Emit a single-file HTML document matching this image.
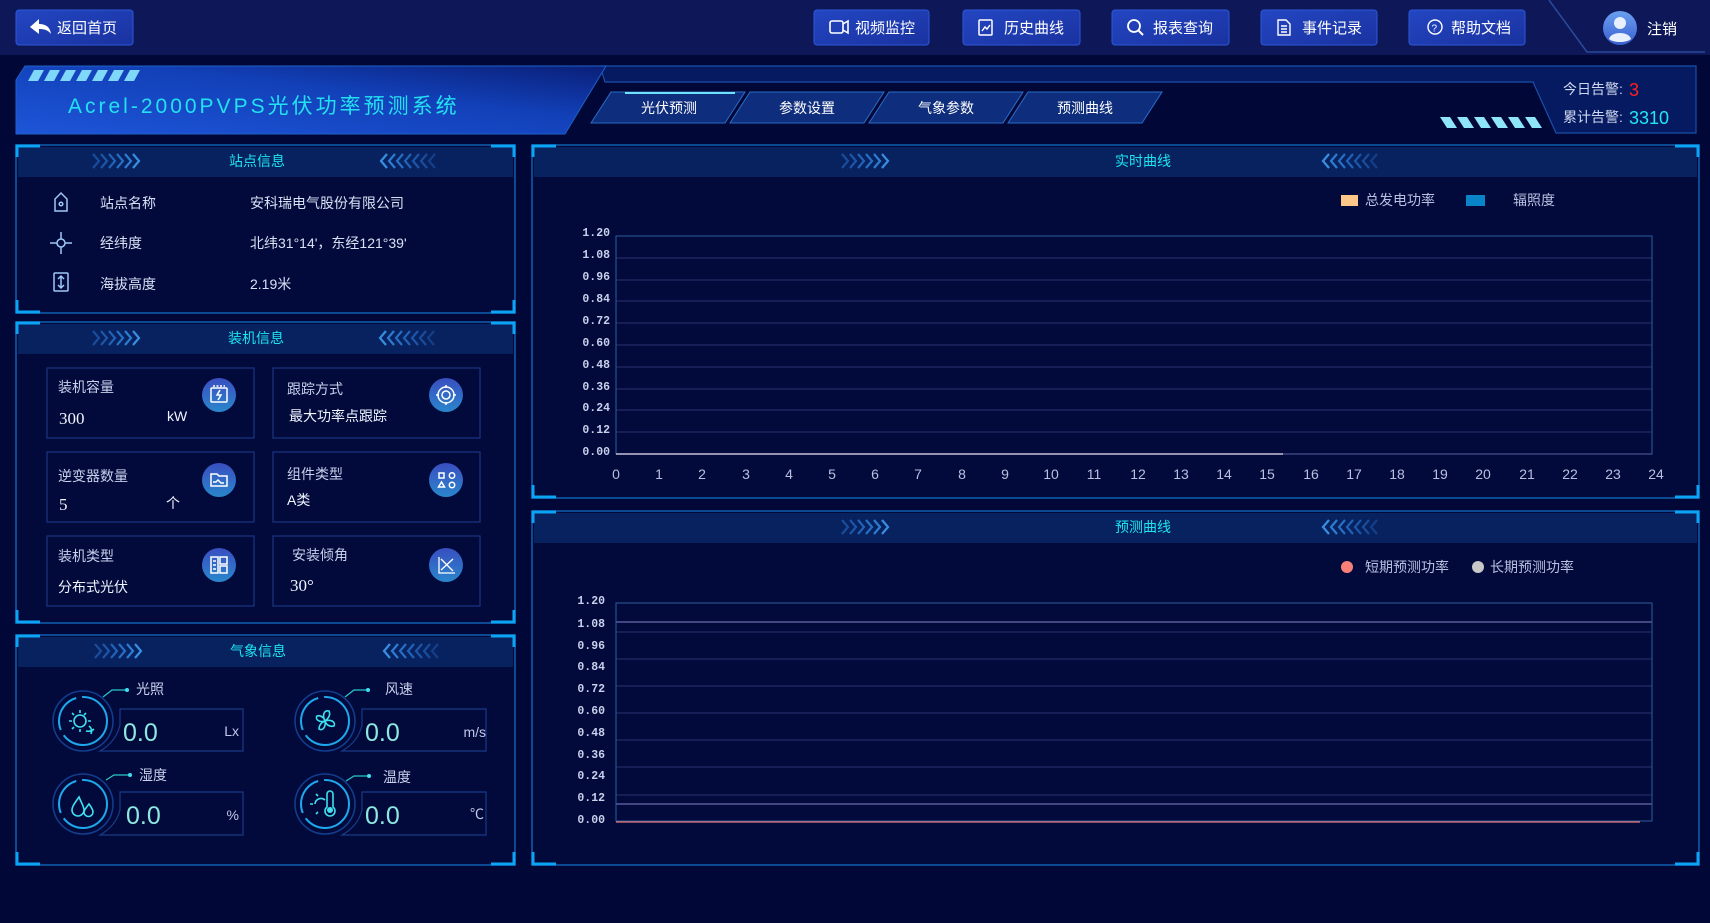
<!DOCTYPE html>
<html><head><meta charset="utf-8"><style>
html,body{margin:0;padding:0;background:#010838;width:1710px;height:923px;overflow:hidden}
svg{display:block;font-family:"Liberation Sans","Noto Sans CJK SC",sans-serif}
</style></head><body>
<svg width="1710" height="923" viewBox="0 0 1710 923" xmlns="http://www.w3.org/2000/svg">
<defs>
<linearGradient id="btn" x1="0" y1="0" x2="1" y2="1"><stop offset="0" stop-color="#2346c2"/><stop offset="1" stop-color="#1a32a0"/></linearGradient>
<linearGradient id="ban" x1="0" y1="1" x2="1" y2="0"><stop offset="0" stop-color="#1d55d8"/><stop offset="0.6" stop-color="#1240b8"/><stop offset="1" stop-color="#0a1f78"/></linearGradient>
<linearGradient id="ic" x1="0" y1="0" x2="0" y2="1"><stop offset="0" stop-color="#3a4ec0"/><stop offset="1" stop-color="#2a86cc"/></linearGradient>
<linearGradient id="av" x1="0" y1="0" x2="0" y2="1"><stop offset="0" stop-color="#6aa0f0"/><stop offset="1" stop-color="#3a5ed0"/></linearGradient>
<g id="chR" fill="none" stroke-width="2.2"><path d="M0,-7 l6,7 l-6,7" stroke="#1a4c9c"/><path d="M8,-7 l6,7 l-6,7" stroke="#1d56a8"/><path d="M16,-7 l6,7 l-6,7" stroke="#2262b6"/><path d="M24,-7 l6,7 l-6,7" stroke="#276ec4"/><path d="M32,-7 l6,7 l-6,7" stroke="#2d7cd2"/><path d="M40,-7 l6,7 l-6,7" stroke="#3a8ee0"/></g>
<g id="chL" fill="none" stroke-width="2.2"><path d="M6,-7 l-6,7 l6,7" stroke="#3a8ee0"/><path d="M14,-7 l-6,7 l6,7" stroke="#2d7cd2"/><path d="M22,-7 l-6,7 l6,7" stroke="#276ec4"/><path d="M30,-7 l-6,7 l6,7" stroke="#2262b6"/><path d="M38,-7 l-6,7 l6,7" stroke="#1d56a8"/><path d="M46,-7 l-6,7 l6,7" stroke="#1a4c9c"/><path d="M54,-7 l-6,7 l6,7" stroke="#163f88"/></g>
</defs>

<rect x="0" y="0" width="1710" height="55" fill="#0e1757"/>
<path d="M1549,0 L1587,52 L1705,52" fill="none" stroke="#2a4a9a" stroke-width="1.5"/>
<rect x="16" y="10" width="117" height="35" rx="3" fill="url(#btn)" stroke="#2d58d8"/>
<path d="M30,27 l9,-8 v5 c7,0 11,3 12,10 c-3,-4 -7,-5 -12,-5 v5 z" fill="#fff"/>
<text x="57" y="33" font-size="15" fill="#fff">返回首页</text>

<g font-size="15" fill="#fff">
<rect x="814" y="10" width="115" height="35" rx="3" fill="url(#btn)" stroke="#2d58d8"/>
<rect x="830" y="21" width="13" height="12" rx="2" fill="none" stroke="#fff" stroke-width="1.6"/><path d="M843,24 l5,-3 v12 l-5,-3" fill="none" stroke="#fff" stroke-width="1.6"/>
<text x="855" y="33">视频监控</text>
<rect x="963" y="10" width="117" height="35" rx="3" fill="url(#btn)" stroke="#2d58d8"/>
<rect x="979" y="20" width="13" height="15" rx="1" fill="none" stroke="#fff" stroke-width="1.5"/><path d="M982,31 l3,-4 l2,2 l3,-4" fill="none" stroke="#fff" stroke-width="1.4"/>
<text x="1004" y="33">历史曲线</text>
<rect x="1112" y="10" width="117" height="35" rx="3" fill="url(#btn)" stroke="#2d58d8"/>
<circle cx="1134" cy="26" r="6" fill="none" stroke="#fff" stroke-width="1.8"/><path d="M1138,30 l5,5" stroke="#fff" stroke-width="2"/>
<text x="1153" y="33">报表查询</text>
<rect x="1261" y="10" width="116" height="35" rx="3" fill="url(#btn)" stroke="#2d58d8"/>
<path d="M1278,20 h8 l4,4 v11 h-12 z M1281,26 h6 M1281,29 h6 M1281,32 h6" fill="none" stroke="#fff" stroke-width="1.4"/>
<text x="1302" y="33">事件记录</text>
<rect x="1409" y="10" width="116" height="35" rx="3" fill="url(#btn)" stroke="#2d58d8"/>
<circle cx="1435" cy="27" r="7" fill="none" stroke="#fff" stroke-width="1.4"/><text x="1431.5" y="31.5" font-size="10">?</text>
<text x="1451" y="33">帮助文档</text>
</g>
<circle cx="1620" cy="28" r="17" fill="url(#av)"/>
<circle cx="1620" cy="23" r="6" fill="#e8f0ff"/><path d="M1609,39 c2,-8 20,-8 22,0 c-5,4 -17,4 -22,0z" fill="#e8f0ff"/>
<text x="1647" y="34" font-size="15" fill="#fff">注销</text>

<path d="M600,66 H1696 V133 H1556 L1533,82 H605 Z" fill="#061a62" stroke="#1a4fa8" stroke-width="1.2"/>
<path d="M16,80 L25,66 H606 L565,134 H16 Z" fill="url(#ban)" stroke="#1f60c8" stroke-width="1"/>
<g fill="#7fd8f8">
<path d="M34,70 h10 l-6,11 h-10z"/><path d="M50,70 h10 l-6,11 h-10z"/><path d="M66,70 h10 l-6,11 h-10z"/><path d="M82,70 h10 l-6,11 h-10z"/><path d="M98,70 h10 l-6,11 h-10z"/><path d="M114,70 h10 l-6,11 h-10z"/><path d="M130,70 h10 l-6,11 h-10z"/>
</g>
<g fill="#8ee4f8">
<path d="M1440,117 h10 l7,11 h-10z"/><path d="M1457,117 h10 l7,11 h-10z"/><path d="M1474,117 h10 l7,11 h-10z"/><path d="M1491,117 h10 l7,11 h-10z"/><path d="M1508,117 h10 l7,11 h-10z"/><path d="M1525,117 h10 l7,11 h-10z"/>
</g>
<text x="68" y="113" font-size="21" fill="#22e2f2" letter-spacing="3">Acrel-2000PVPS光伏功率预测系统</text>
<g font-size="14" fill="#fff" text-anchor="middle">
<path d="M611,92 H745 L725,123 H591 Z" fill="#0e2d7c" stroke="#2a6cc8"/><path d="M625,93 H735" stroke="#6fe0ff" stroke-width="2"/>
<text x="669" y="113">光伏预测</text>
<path d="M750,92 H884 L864,123 H730 Z" fill="#0e2d7c" stroke="#2a6cc8"/><text x="807" y="113">参数设置</text>
<path d="M889,92 H1023 L1003,123 H869 Z" fill="#0e2d7c" stroke="#2a6cc8"/><text x="946" y="113">气象参数</text>
<path d="M1028,92 H1162 L1142,123 H1008 Z" fill="#0e2d7c" stroke="#2a6cc8"/><text x="1085" y="113">预测曲线</text>
</g>
<text x="1563" y="94" font-size="14" fill="#d0d8f0">今日告警:</text><text x="1629" y="96" font-size="18" fill="#ff2020">3</text>
<text x="1563" y="122" font-size="14" fill="#d0d8f0">累计告警:</text><text x="1629" y="124" font-size="18" fill="#22e8f2">3310</text>

<g fill="none">
<rect x="16" y="145" width="499" height="168" fill="#020a3c" stroke="#0f5fb0" stroke-width="1.5"/><rect x="18" y="147" width="495" height="30" fill="#07225f"/>
<rect x="16" y="322" width="499" height="301" fill="#020a3c" stroke="#0f5fb0" stroke-width="1.5"/><rect x="18" y="324" width="495" height="30" fill="#07225f"/>
<rect x="16" y="635" width="499" height="230" fill="#020a3c" stroke="#0f5fb0" stroke-width="1.5"/><rect x="18" y="637" width="495" height="30" fill="#07225f"/>
<rect x="532" y="145" width="1167" height="353" fill="#020a3c" stroke="#0f5fb0" stroke-width="1.5"/><rect x="534" y="147" width="1163" height="30" fill="#07225f"/>
<rect x="532" y="511" width="1167" height="354" fill="#020a3c" stroke="#0f5fb0" stroke-width="1.5"/><rect x="534" y="513" width="1163" height="30" fill="#07225f"/>
</g>
<g fill="none" stroke="#0ca4f4" stroke-width="3">
<path d="M17,157 V146 H40"/><path d="M491,146 H514 V157"/><path d="M17,300 V312 H40"/><path d="M491,312 H514 V300"/>
<path d="M17,334 V323 H40"/><path d="M491,323 H514 V334"/><path d="M17,610 V622 H40"/><path d="M491,622 H514 V610"/>
<path d="M17,647 V636 H40"/><path d="M491,636 H514 V647"/><path d="M17,852 V864 H40"/><path d="M491,864 H514 V852"/>
<path d="M533,157 V146 H556"/><path d="M1675,146 H1698 V157"/><path d="M533,485 V497 H556"/><path d="M1675,497 H1698 V485"/>
<path d="M533,523 V512 H556"/><path d="M1675,512 H1698 V523"/><path d="M533,852 V864 H556"/><path d="M1675,864 H1698 V852"/>
</g>
<use href="#chR" x="93" y="161"/><use href="#chL" x="381" y="161"/>
<use href="#chR" x="93" y="338"/><use href="#chL" x="380" y="338"/>
<use href="#chR" x="95" y="651"/><use href="#chL" x="384" y="651"/>
<use href="#chR" x="842" y="161"/><use href="#chL" x="1323" y="161"/>
<use href="#chR" x="842" y="527"/><use href="#chL" x="1323" y="527"/>
<g font-size="14" fill="#1ee4f0" text-anchor="middle">
<text x="257" y="166">站点信息</text><text x="256" y="343">装机信息</text><text x="258" y="656">气象信息</text>
<text x="1143" y="166">实时曲线</text><text x="1143" y="532">预测曲线</text>
</g>

<g fill="none" stroke="#9ec8f8" stroke-width="1.5">
<path d="M55,211 V199 L61,193 L67,199 V211 Z"/><circle cx="61" cy="204" r="1.8"/>
<path d="M50,243 H72 M61,232 V254"/><circle cx="61" cy="243" r="4" fill="#020a3c"/>
<rect x="54" y="273" width="14" height="18" rx="1"/><path d="M61,276 V288 M58,279 l3,-3 l3,3 M58,285 l3,3 l3,-3"/>
</g>
<g font-size="14" fill="#d8e0f4">
<text x="100" y="208">站点名称</text><text x="250" y="208">安科瑞电气股份有限公司</text>
<text x="100" y="248">经纬度</text><text x="250" y="248">北纬31°14'，东经121°39'</text>
<text x="100" y="289">海拔高度</text><text x="250" y="289">2.19米</text>
</g>

<g fill="none" stroke="#1a3580" stroke-width="1.2">
<rect x="47" y="368" width="207" height="70"/><rect x="273" y="368" width="207" height="70"/>
<rect x="47" y="452" width="207" height="70"/><rect x="273" y="452" width="207" height="70"/>
<rect x="47" y="536" width="207" height="70"/><rect x="273" y="536" width="207" height="70"/>
</g>
<g fill="url(#ic)"><circle cx="219" cy="395" r="17"/><circle cx="446" cy="395" r="17"/><circle cx="219" cy="480" r="17"/><circle cx="446" cy="480" r="17"/><circle cx="219" cy="565" r="17"/><circle cx="446" cy="565" r="17"/></g>
<g fill="none" stroke="#fff" stroke-width="1.5">
<rect x="211" y="388" width="16" height="14" rx="1"/><path d="M213,386 h12" stroke-dasharray="2 1.5"/><path d="M220,390 l-3,5 h4 l-3,5"/>
<circle cx="446" cy="395" r="8"/><circle cx="446" cy="395" r="4"/><path d="M446,385 v3 M446,402 v3 M436,395 h3 M453,395 h3"/>
<path d="M211,474 h6 l2,2 h8 v10 h-16 z M213,482 h3 l2,-2 l3,3 h3"/>
<rect x="439" y="473" width="5" height="5"/><circle cx="452" cy="475.5" r="2.7"/><path d="M441.5,482 l-3,5 h6z"/><circle cx="452" cy="485" r="2.7"/>
<rect x="211" y="557" width="7" height="16"/><rect x="220" y="557" width="7" height="7"/><rect x="220" y="566" width="7" height="7"/><path d="M213,561 h3 M213,565 h3 M213,569 h3"/>
<path d="M439,557 v16 h16 M441,570 l12,-11 M441,559 l12,12" stroke-width="1.3"/>
</g>
<g font-size="14" fill="#c8d0ec">
<text x="58" y="392">装机容量</text><text x="287" y="394">跟踪方式</text>
<text x="58" y="481">逆变器数量</text><text x="287" y="479">组件类型</text>
<text x="58" y="561">装机类型</text><text x="292" y="560">安装倾角</text>
</g>
<g fill="#f0f4ff">
<text x="59" y="424" font-size="17" font-family="Liberation Serif">300</text><text x="167" y="421" font-size="14">kW</text>
<text x="289" y="421" font-size="14">最大功率点跟踪</text>
<text x="59" y="510" font-size="17" font-family="Liberation Serif">5</text><text x="166" y="508" font-size="14">个</text>
<text x="287" y="505" font-size="14">A类</text>
<text x="58" y="592" font-size="14">分布式光伏</text>
<text x="290" y="591" font-size="17" font-family="Liberation Serif">30°</text>
</g>

<g fill="none">
<g stroke="#123e8e" stroke-width="1.5"><circle cx="83" cy="721" r="30"/><circle cx="325" cy="721" r="30"/><circle cx="83" cy="804" r="30"/><circle cx="325" cy="804" r="30"/></g>
<g stroke="#1fa8ec" stroke-width="2" stroke-dasharray="60 6 40 6"><circle cx="83" cy="721" r="24"/><circle cx="325" cy="721" r="24"/><circle cx="83" cy="804" r="24"/><circle cx="325" cy="804" r="24"/></g>
<g stroke="#1a3a86" stroke-width="1.2">
<path d="M120,709 H243 V751 H100 Q116,742 120,725 Z"/><path d="M362,709 H486 V751 H342 Q358,742 362,725 Z"/>
<path d="M120,792 H243 V835 H100 Q116,826 120,810 Z"/><path d="M362,792 H486 V835 H342 Q358,826 362,810 Z"/>
</g>
<g stroke="#2ac8c8" stroke-width="1.2"><path d="M103,697 L112,690 H126"/><path d="M345,697 L354,690 H367"/><path d="M106,780 L114,775 H129"/><path d="M346,781 L354,776 H368"/></g>
<g stroke="#3ee0f0" stroke-width="1.6">
<circle cx="80" cy="721" r="6"/><path d="M80,710 v3 M80,729 v3 M69,721 h3 M88,721 h3 M72,713 l2,2 M86,713 l-2,2 M72,729 l2,-2 M89,726 q4,3 2,8 M86,731 q5,1 8,-2"/>
<path d="M325,721 c-3,-6 -1,-11 4,-10 c2,4 -1,8 -4,10 c6,-2 11,1 9,5 c-4,1 -8,-1 -9,-5 c1,7 -3,10 -6,8 c0,-4 3,-7 6,-8 c-6,2 -10,-2 -8,-5 c3,-1 7,1 8,5z"/>
<path d="M79,797 c-5,7 -7,10 -7,13 a6,6 0 0 0 12,0 c0,-3 -2,-6 -5,-13z M89,804 c-3,4 -5,6 -5,8 a4.5,4.5 0 0 0 9,0 c0,-2 -1,-4 -4,-8z"/>
<path d="M327,794 a3,3 0 0 1 6,0 v13 a5,5 0 1 1 -6,0z M315,804 a6,6 0 0 1 10,-4 M313,804 h-3 M318,796 l-2,-2 M318,812 l-2,2"/>
</g>
</g>
<g fill="#3ee0f0"><circle cx="127" cy="690" r="2"/><circle cx="368" cy="690" r="2"/><circle cx="130" cy="775" r="2"/><circle cx="369" cy="776" r="2"/><circle cx="330" cy="810" r="3"/></g>
<g font-size="14" fill="#c8d0ec"><text x="136" y="694">光照</text><text x="385" y="694">风速</text><text x="139" y="780">湿度</text><text x="383" y="782">温度</text></g>
<g font-size="25" fill="#8ee8e0"><text x="123" y="741">0.0</text><text x="365" y="741">0.0</text><text x="126" y="824">0.0</text><text x="365" y="824">0.0</text></g>
<g font-size="14" fill="#c0c8e8" text-anchor="end"><text x="239" y="736">Lx</text><text x="486" y="737">m/s</text><text x="239" y="820">%</text><text x="484" y="819">℃</text></g>

<rect x="1341" y="195" width="17" height="11" fill="#ffc888"/><text x="1365" y="205" font-size="14" fill="#b8c0e0">总发电功率</text>
<rect x="1466" y="195" width="19" height="11" fill="#0a84c8"/><text x="1513" y="205" font-size="14" fill="#b8c0e0">辐照度</text>
<g stroke="#2c3170" stroke-width="1">
<path d="M616,258 H1652 M616,280 H1652 M616,301 H1652 M616,323 H1652 M616,345 H1652 M616,367 H1652 M616,389 H1652 M616,410 H1652 M616,432 H1652"/>
</g>
<rect x="616" y="236" width="1036" height="218" fill="none" stroke="#2a5c9c"/>
<path d="M616,454 H1283" stroke="#c8c0d8" stroke-width="1.5"/><path d="M1283,454 H1652" stroke="#5a5ea0" stroke-width="1"/>
<g font-size="11.5" fill="#c8d0ec" font-family="Liberation Mono" font-weight="bold" text-anchor="end">
<text x="610" y="236">1.20</text><text x="610" y="258">1.08</text><text x="610" y="280">0.96</text><text x="610" y="302">0.84</text><text x="610" y="324">0.72</text><text x="610" y="346">0.60</text><text x="610" y="368">0.48</text><text x="610" y="390">0.36</text><text x="610" y="411">0.24</text><text x="610" y="433">0.12</text><text x="610" y="455">0.00</text>
</g>
<g font-size="14" fill="#b8c0e0" text-anchor="middle">
<text x="616" y="479">0</text><text x="659" y="479">1</text><text x="702" y="479">2</text><text x="746" y="479">3</text><text x="789" y="479">4</text><text x="832" y="479">5</text><text x="875" y="479">6</text><text x="918" y="479">7</text><text x="962" y="479">8</text><text x="1005" y="479">9</text><text x="1051" y="479">10</text><text x="1094" y="479">11</text><text x="1138" y="479">12</text><text x="1181" y="479">13</text><text x="1224" y="479">14</text><text x="1267" y="479">15</text><text x="1311" y="479">16</text><text x="1354" y="479">17</text><text x="1397" y="479">18</text><text x="1440" y="479">19</text><text x="1483" y="479">20</text><text x="1527" y="479">21</text><text x="1570" y="479">22</text><text x="1613" y="479">23</text><text x="1656" y="479">24</text>
</g>

<circle cx="1347" cy="567" r="6" fill="#f88078"/><text x="1365" y="572" font-size="14" fill="#b8c0e0">短期预测功率</text>
<circle cx="1478" cy="567" r="6" fill="#c8c8c8"/><text x="1490" y="572" font-size="14" fill="#b8c0e0">长期预测功率</text>
<g stroke="#2c3170" stroke-width="1">
<path d="M616,632 H1652 M616,659 H1652 M616,686 H1652 M616,713 H1652 M616,740 H1652 M616,767 H1652 M616,795 H1652"/>
</g>
<path d="M616,622 H1652 M616,804 H1652" stroke="#6a6aac" stroke-width="1.2"/>
<rect x="616" y="603" width="1036" height="218" fill="none" stroke="#2a5c9c"/>
<path d="M616,822 H1640" stroke="#e87878" stroke-width="1.2"/>
<g font-size="11.5" fill="#c8d0ec" font-family="Liberation Mono" font-weight="bold" text-anchor="end">
<text x="605" y="604">1.20</text><text x="605" y="627">1.08</text><text x="605" y="649">0.96</text><text x="605" y="670">0.84</text><text x="605" y="692">0.72</text><text x="605" y="714">0.60</text><text x="605" y="736">0.48</text><text x="605" y="758">0.36</text><text x="605" y="779">0.24</text><text x="605" y="801">0.12</text><text x="605" y="823">0.00</text>
</g>
</svg>
</body></html>
